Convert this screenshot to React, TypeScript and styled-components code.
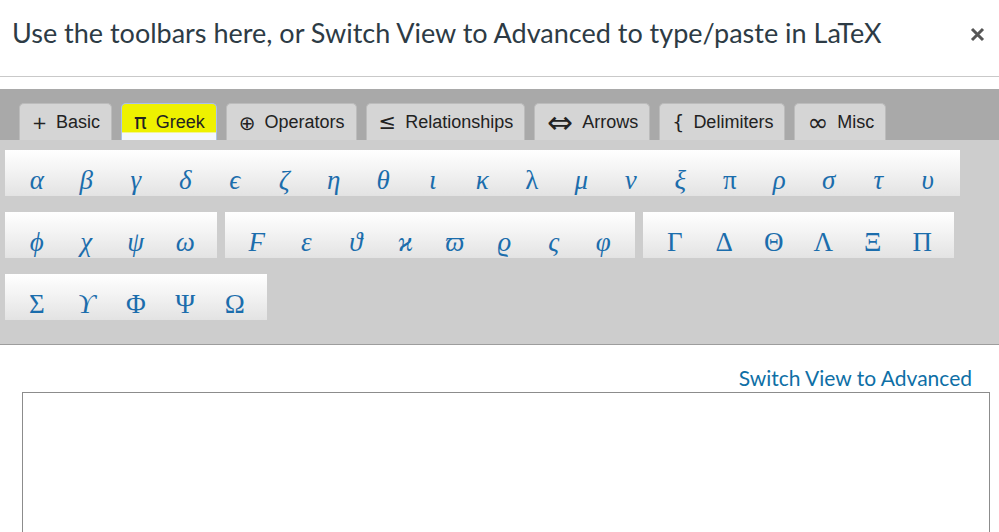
import styled, { createGlobalStyle } from "styled-components";

const GlobalStyle = createGlobalStyle`
  html, body {
    margin: 0;
    padding: 0;
    background: #fff;
  }
  body {
    font-family: Lato, "Open Sans", sans-serif;
    overflow: hidden;
  }
`;

const Dialog = styled.div`
  width: 999px;
  height: 532px;
  overflow: hidden;
  background: #fff;
`;

const Header = styled.div`
  display: flex;
  align-items: flex-start;
  justify-content: space-between;
  height: 76px;
  padding: 0 13px 0 12px;
  border-bottom: 1px solid #c9c9c9;
  box-sizing: content-box;
`;

const Title = styled.h2`
  margin: 0;
  padding-top: 14px;
  font-family: Lato, sans-serif;
  font-weight: 400;
  font-size: 27px;
  line-height: 38px;
  color: #2d3b45;
`;

const CloseButton = styled.button`
  margin-top: 25px;
  border: 0;
  padding: 0;
  background: none;
  width: 18px;
  height: 18px;
  display: flex;
  align-items: center;
  justify-content: center;
  color: #555;
  cursor: pointer;
`;

const Toolbar = styled.div`
  margin-top: 12px;
`;

const TabBar = styled.div`
  display: flex;
  align-items: flex-end;
  gap: 9px;
  height: 51px;
  padding-left: 19px;
  background: #a9a9a9;
  box-sizing: border-box;
`;

const Tab = styled.div<{ $active?: boolean }>`
  display: flex;
  align-items: center;
  gap: 9px;
  height: 37px;
  padding: 1px 11px 0 12px;
  box-sizing: border-box;
  border: 1px solid ${(p) => (p.$active ? "#a9c1ea" : "#bcbcbc")};
  border-bottom: 0;
  border-radius: 5px 5px 0 0;
  background: ${(p) =>
    p.$active
      ? "linear-gradient(to bottom, #eef100 0, #eef100 78%, #f4f7fd 80%, #f4f7fd 100%)"
      : "#d5d5d5"};
  font-family: "Liberation Sans", Arial, sans-serif;
  font-size: 18px;
  color: #222;
  white-space: nowrap;
  cursor: pointer;
`;

const TabIcon = styled.span<{ $size: number }>`
  font-family: "DejaVu Sans", "Liberation Sans", sans-serif;
  font-size: ${(p) => p.$size}px;
  line-height: 1;
  color: #222;
`;

const Panel = styled.div`
  display: flex;
  flex-direction: column;
  gap: 16px;
  padding: 10px 0 24px 5px;
  background: #cdcdcd;
  border-bottom: 1px solid #9d9d9d;
`;

const Row = styled.div`
  display: flex;
  gap: 8px;
`;

const Group = styled.div`
  display: flex;
  padding: 0 7px;
  height: 46px;
  background: linear-gradient(to bottom, #ffffff 0%, #f3f3f3 45%, #e3e3e3 100%);
`;

const Sym = styled.span<{ $upright?: boolean }>`
  width: 49.5px;
  height: 46px;
  box-sizing: border-box;
  padding-top: 17px;
  text-align: center;
  font-family: "Liberation Serif", "DejaVu Serif", "Times New Roman", serif;
  font-style: ${(p) => (p.$upright ? "normal" : "italic")};
  font-size: 27px;
  line-height: 26px;
  color: #1b6dac;
  cursor: pointer;
`;

const LinkRow = styled.div`
  display: flex;
  justify-content: flex-end;
  padding: 19px 27px 0 0;
  height: 47px;
  box-sizing: border-box;
`;

const SwitchLink = styled.a`
  font-family: Lato, sans-serif;
  font-size: 21px;
  line-height: 28px;
  color: #0e6fa6;
  text-decoration: none;
  cursor: pointer;
`;

const Editor = styled.div`
  margin: 0 9px 0 22px;
  height: 200px;
  border: 1px solid #8c8c8c;
  background: #fff;
`;

type SymDef = { s: string; up?: boolean };

const rows: SymDef[][][] = [
  [
    [
      { s: "α" }, { s: "β" }, { s: "γ" }, { s: "δ" }, { s: "ϵ" }, { s: "ζ" },
      { s: "η" }, { s: "θ" }, { s: "ι" }, { s: "κ" }, { s: "λ", up: true },
      { s: "μ" }, { s: "ν" }, { s: "ξ" }, { s: "π", up: true }, { s: "ρ" },
      { s: "σ" }, { s: "τ" }, { s: "υ" },
    ],
  ],
  [
    [{ s: "ϕ" }, { s: "χ" }, { s: "ψ" }, { s: "ω" }],
    [
      { s: "Ϝ" }, { s: "ε" }, { s: "ϑ" }, { s: "ϰ" }, { s: "ϖ" },
      { s: "ϱ" }, { s: "ς" }, { s: "φ" },
    ],
    [
      { s: "Γ", up: true }, { s: "Δ", up: true }, { s: "Θ", up: true },
      { s: "Λ", up: true }, { s: "Ξ", up: true }, { s: "Π", up: true },
    ],
  ],
  [
    [
      { s: "Σ", up: true }, { s: "ϒ" }, { s: "Φ", up: true },
      { s: "Ψ", up: true }, { s: "Ω", up: true },
    ],
  ],
];

const tabs = [
  { ico: "+", size: 18, label: "Basic" },
  { ico: "π", size: 21, label: "Greek", active: true },
  { ico: "⊕", size: 20, label: "Operators" },
  { ico: "≤", size: 21, label: "Relationships" },
  { ico: "⇔", size: 31, label: "Arrows" },
  { ico: "{", size: 19, label: "Delimiters" },
  { ico: "∞", size: 25, label: "Misc" },
];

export default function App() {
  return (
    <>
      <GlobalStyle />
      <Dialog>
        <Header>
          <Title>Use the toolbars here, or Switch View to Advanced to type/paste in LaTeX</Title>
          <CloseButton aria-label="Close">
            <svg width="15" height="15" viewBox="0 0 15 15">
              <path d="M2 2 L13 13 M13 2 L2 13" stroke="currentColor" strokeWidth="3" strokeLinecap="butt" />
            </svg>
          </CloseButton>
        </Header>

        <Toolbar>
          <TabBar>
            {tabs.map((t) => (
              <Tab key={t.label} $active={t.active}>
                <TabIcon $size={t.size}>{t.ico}</TabIcon>
                {t.label}
              </Tab>
            ))}
          </TabBar>
          <Panel>
            {rows.map((groups, ri) => (
              <Row key={ri}>
                {groups.map((g, gi) => (
                  <Group key={gi}>
                    {g.map((d) => (
                      <Sym key={d.s} $upright={d.up}>{d.s}</Sym>
                    ))}
                  </Group>
                ))}
              </Row>
            ))}
          </Panel>
        </Toolbar>

        <LinkRow>
          <SwitchLink>Switch View to Advanced</SwitchLink>
        </LinkRow>
        <Editor />
      </Dialog>
    </>
  );
}
